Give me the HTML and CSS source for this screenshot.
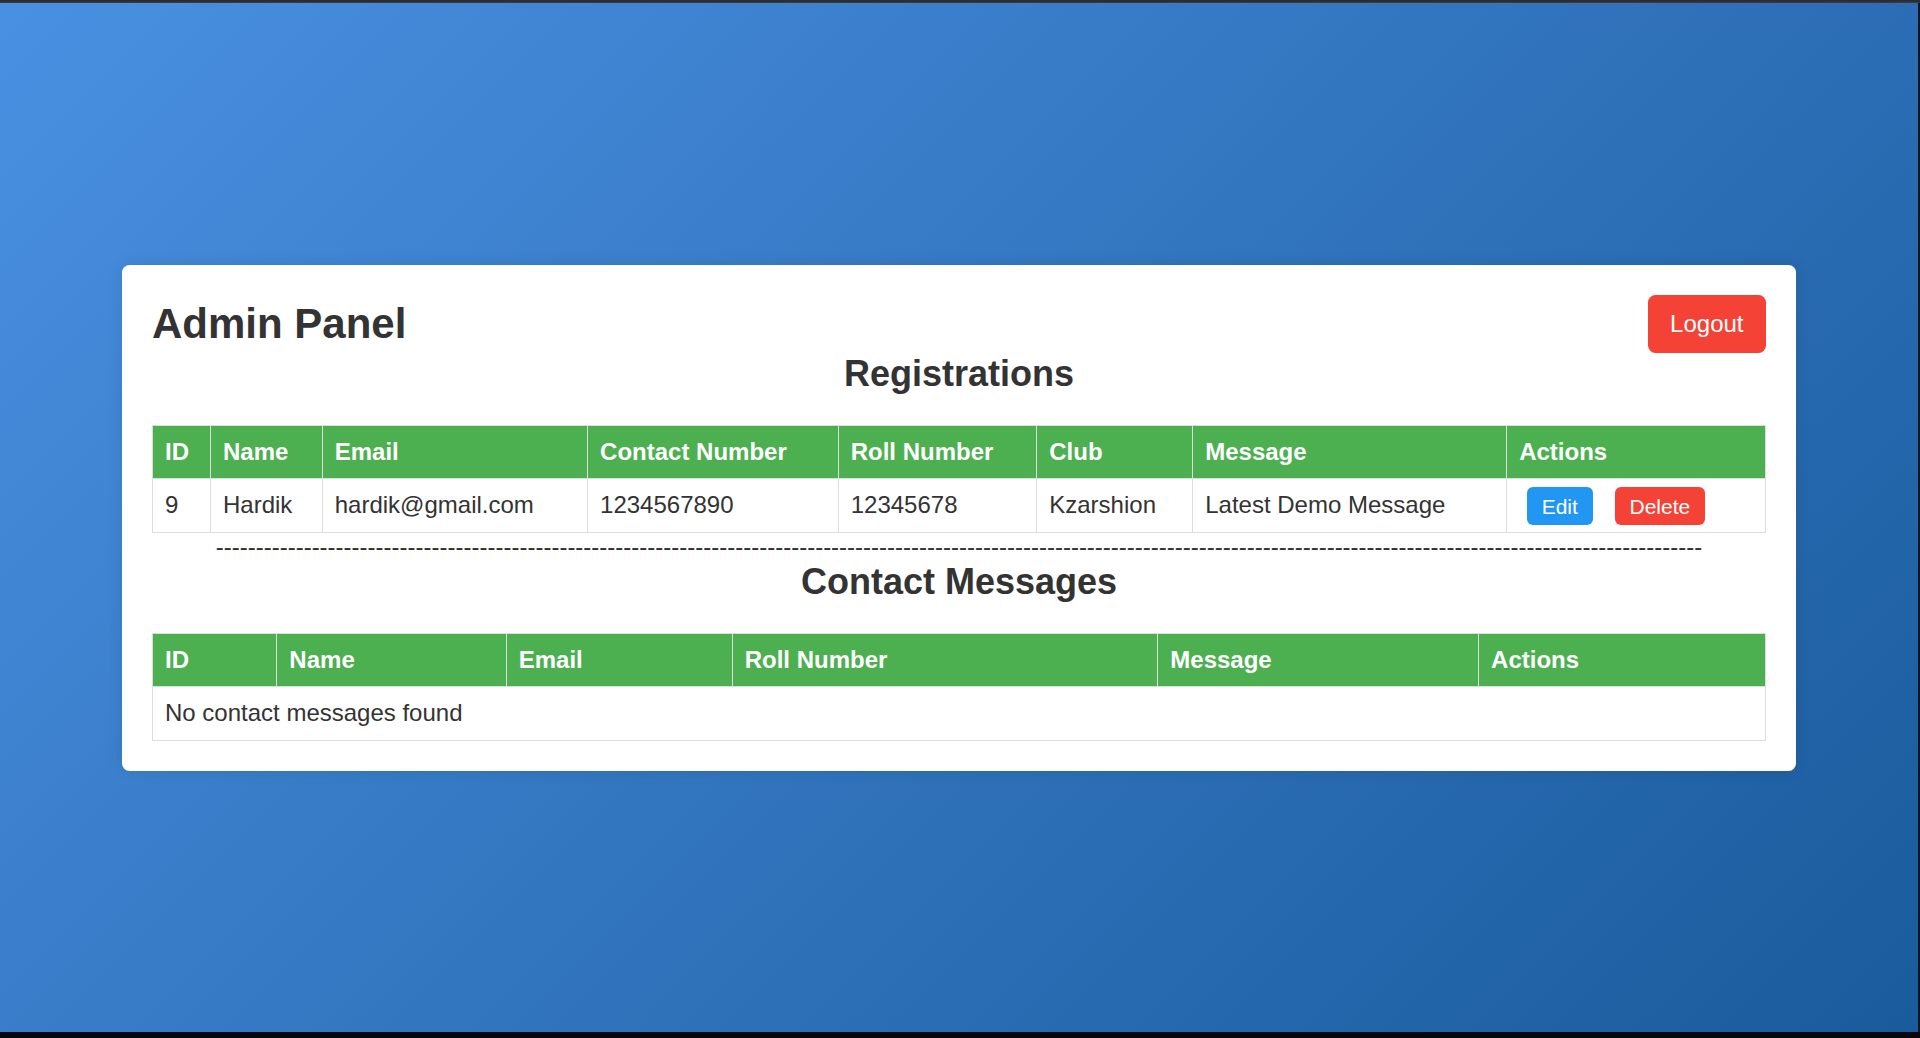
FILE: index.html
```html
<!DOCTYPE html>
<html lang="en">
<head>
<meta charset="utf-8">
<title>Admin Panel</title>
<link rel="stylesheet" href="styles.css">
</head>
<body>
<div class="topbar"></div>
<div class="middle">
  <main class="viewport">
    <div class="card">
      <div class="header">
        <h1 class="title">Admin Panel</h1>
        <a class="logout" href="#">Logout</a>
      </div>
      <h2 class="section-title">Registrations</h2>
      <table class="data">
        <thead>
          <tr>
            <th>ID</th><th>Name</th><th>Email</th><th>Contact Number</th><th>Roll Number</th><th>Club</th><th>Message</th><th>Actions</th>
          </tr>
        </thead>
        <tbody>
          <tr>
            <td>9</td><td>Hardik</td><td>hardik@gmail.com</td><td>1234567890</td><td>12345678</td><td>Kzarshion</td><td>Latest Demo Message</td>
            <td><a class="btn btn-edit" href="#">Edit</a> <a class="btn btn-delete" href="#">Delete</a></td>
          </tr>
        </tbody>
      </table>
      <div class="divider">------------------------------------------------------------------------------------------------------------------------------------------------------------------------------------------</div>
      <h2 class="section-title">Contact Messages</h2>
      <table class="data">
        <thead>
          <tr>
            <th>ID</th><th>Name</th><th>Email</th><th>Roll Number</th><th>Message</th><th>Actions</th>
          </tr>
        </thead>
        <tbody>
          <tr>
            <td colspan="6">No contact messages found</td>
          </tr>
        </tbody>
      </table>
    </div>
  </main>
  <div class="rightbar"></div>
</div>
<div class="bottombar"></div>
</body>
</html>
```
FILE: styles.css
```css
html, body {
  margin: 0;
  padding: 0;
}
body {
  width: 1920px;
  height: 1038px;
  display: flex;
  flex-direction: column;
  overflow: hidden;
  font-family: "Liberation Sans", Arial, sans-serif;
  color: #333;
  background: #0a0a12;
}
.topbar {
  height: 3px;
  flex: none;
  background: #2c2c32;
  border-bottom: 1px solid #3a3a40;
  box-sizing: border-box;
}
.middle {
  flex: 1;
  display: flex;
  min-height: 0;
}
.viewport {
  flex: 1;
  display: flex;
  align-items: center;
  justify-content: center;
  background: linear-gradient(135deg, #4a90e2 0%, #1a5b9c 100%);
}
.rightbar {
  width: 2px;
  flex: none;
  background: #14141c;
}
.bottombar {
  height: 6px;
  flex: none;
  background: #07070e;
}
.card {
  width: 1674px;
  box-sizing: border-box;
  padding: 30px;
  background: #fff;
  border-radius: 7.5px;
  box-shadow: 0 0 15px rgba(0, 0, 0, 0.1);
}
.header {
  display: flex;
  justify-content: space-between;
  align-items: center;
}
.title {
  margin: 0;
  font-size: 42px;
  font-weight: bold;
  color: #333;
}
.logout {
  display: inline-block;
  background: #f44336;
  color: #fff;
  text-decoration: none;
  font-size: 24px;
  padding: 15px 22.5px;
  border-radius: 7.5px;
}
.section-title {
  margin: 0 0 30px;
  text-align: center;
  font-size: 36px;
  font-weight: bold;
  color: #333;
}
.data {
  width: 100%;
  border-collapse: collapse;
  font-size: 24px;
}
.data th,
.data td {
  border: 1px solid #ddd;
  padding: 12.25px 12px;
  text-align: left;
}
.data th {
  background: #4caf50;
  color: #fff;
  font-weight: bold;
}
.data td {
  color: #333;
}
.btn {
  color: #fff;
  text-decoration: none;
  font-size: 21px;
  padding: 7.5px 15px;
  margin: 0 7.5px;
  border-radius: 6px;
}
.btn-edit {
  background: #2196f3;
}
.btn-delete {
  background: #f44336;
}
.divider {
  text-align: center;
  font-size: 24px;
  color: #333;
  white-space: nowrap;
  overflow: hidden;
}
```
